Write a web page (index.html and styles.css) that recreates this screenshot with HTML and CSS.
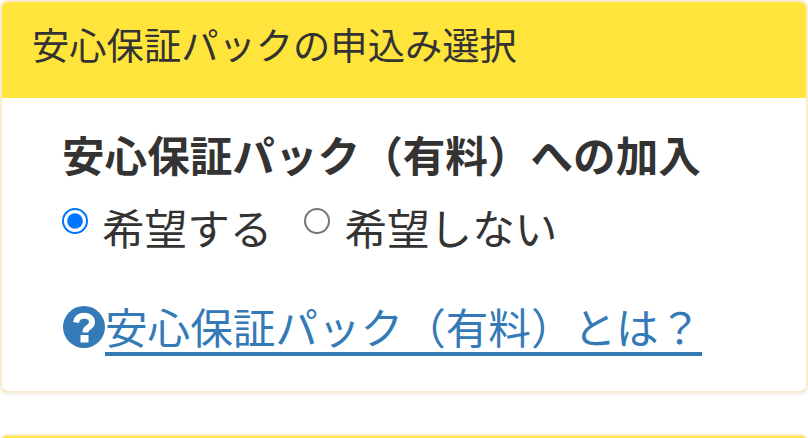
FILE: index.html
```html
<!DOCTYPE html>
<html lang="ja">
<head>
    <meta charset="UTF-8">
    <title>安心保証パックの申込み選択</title>
    <link rel="stylesheet" href="styles.css">
</head>
<body>
    <div class="panel">
        <div class="panel-heading">安心保証パックの申込み選択</div>
        <div class="panel-body">
            <h3 class="pack-title">安心保証パック（有料）への加入</h3>
            <div class="radios">
                <label class="radio-item"><input type="radio" name="pack" checked>希望する</label>
                <label class="radio-item"><input type="radio" name="pack">希望しない</label>
            </div>
            <p class="help">
                <svg class="help-icon" viewBox="0 0 42 42">
                    <circle cx="21" cy="21" r="21" fill="#337ab7"/>
                    <path d="M13 16.500c.6-4.500 3.800-6.800 8-6.800 4.500 0 8 2.600 8 6.300 0 2.800-1.600 4.200-3.600 5.500-1.900 1.200-2.900 2-2.900 4v1" fill="none" stroke="#fff" stroke-width="6"/>
                    <rect x="17.500" y="29" width="8" height="7.500" fill="#fff"/>
                </svg><a href="#">安心保証パック（有料）とは？</a>
            </p>
        </div>
    </div>
    <div class="panel panel-next">
        <div class="panel-heading"></div>
    </div>
</body>
</html>
```

FILE: styles.css
```css
*{
    box-sizing: border-box;
}
html, body{
    height: 438px;
    overflow: hidden;
}
body{
    margin: 0;
    background-color: white;
    color: #333;
    font-family: "Liberation Sans", "Noto Sans CJK JP", sans-serif;
}
.panel{
    border: 2px solid #faebcc;
    border-radius: 8px;
    background-color: white;
    box-shadow: 0 2px 3px rgba(0,0,0,.05);
    margin-bottom: 41px;
    overflow: hidden;
}
.panel-heading{
    height: 96px;
    padding: 21px 30px 0;
    background-color: #ffe53b;
    font-size: 37.300px;
    line-height: 48px;
}
.panel-body{
    height: 293px;
    padding: 31px 60px 0;
}
.pack-title{
    margin: 0;
    font-size: 42.600px;
    line-height: 56px;
    font-weight: bold;
}
.radios{
    display: flex;
    gap: 32px;
    margin-top: 17px;
}
.radio-item{
    display: flex;
    align-items: flex-start;
    gap: 14px;
    font-size: 42.600px;
    line-height: 56px;
}
.radio-item input{
    zoom: 2;
    width: 13px;
    height: 13px;
    margin: 3px 0 0;
}
.help{
    display: flex;
    align-items: flex-start;
    margin: 40px 0 0;
    font-size: 42.600px;
    line-height: 60px;
}
.help-icon{
    width: 42px;
    height: 42px;
    flex: none;
    margin: 8px 1px 0 1px;
}
.help a{
    color: #337ab7;
    text-decoration: none;
    border-bottom: 4px solid #337ab7;
    height: 58px;
    line-height: 62px;
    margin-left: -1px;
    padding-right: 1px;
}
.panel-next{
    margin-bottom: 0;
}
.panel-next .panel-heading{
    height: 10px;
    padding: 0;
}
```
